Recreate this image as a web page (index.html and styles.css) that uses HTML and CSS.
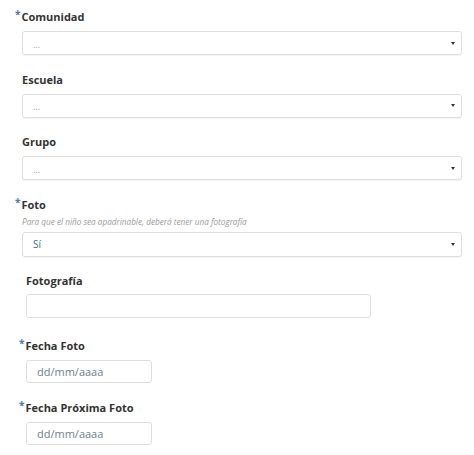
FILE: index.html
```html
<!DOCTYPE html>
<html lang="es">
<head>
<meta charset="utf-8">
<link rel="stylesheet" href="styles.css">
</head>
<body>
<form class="form">
  <div class="group">
    <label class="label"><span class="req">*</span>Comunidad</label>
    <div class="select"><span class="placeholder">...</span><span class="caret"></span></div>
  </div>
  <div class="group">
    <label class="label">Escuela</label>
    <div class="select"><span class="placeholder">...</span><span class="caret"></span></div>
  </div>
  <div class="group">
    <label class="label">Grupo</label>
    <div class="select"><span class="placeholder">...</span><span class="caret"></span></div>
  </div>
  <div class="group">
    <label class="label label-help"><span class="req">*</span>Foto</label>
    <p class="help">Para que el niño sea apadrinable, deberá tener una fotografía</p>
    <div class="select tall"><span class="value">Sí</span><span class="caret"></span></div>
  </div>
  <div class="group inner file">
    <label class="label label-file">Fotografía</label>
    <div class="input wide"></div>
  </div>
  <div class="group inner">
    <label class="label label-date"><span class="req">*</span>Fecha Foto</label>
    <div class="input date"><span class="ph">dd/mm/aaaa</span></div>
  </div>
  <div class="group inner">
    <label class="label label-date"><span class="req">*</span>Fecha Próxima Foto</label>
    <div class="input date"><span class="ph">dd/mm/aaaa</span></div>
  </div>
</form>
</body>
</html>
```
FILE: styles.css
```css
* { box-sizing: border-box; }
html, body { margin: 0; padding: 0; background: #fff; }
body { font-family: "Open Sans", "Noto Sans", sans-serif; color: #333; }
.form { display: flex; flex-direction: column; padding: 9px 12px 0 22px; width: 474px; }
.group { display: flex; flex-direction: column; margin-bottom: 16.5px; }
.label { font-size: 11px; font-weight: 700; line-height: 16px; color: #333; margin-bottom: 6px; }
.label-help { margin-bottom: 0; }
.label-file { margin-bottom: 5px; }
.label-date { margin-bottom: 6px; }
.req { color: #4a7bb0; font-size: 10px; position: relative; top: -3px; margin-left: -7px; margin-right: 1px; font-weight: 700; }
.help { margin: 3px 0 5px; font-size: 8.2px; font-style: italic; color: #9a9a9a; line-height: 11px; }
.select { height: 24px; width: 440px; border: 1px solid #dedede; border-radius: 3px; box-shadow: 0 1px 1px rgba(0,0,0,0.05); display: flex; align-items: center; justify-content: space-between; padding: 0 6px 0 10px; }
.tall { height: 25px; }
.placeholder { font-size: 9px; color: #999; line-height: 1; position: relative; top: 1px; }
.value { font-size: 10px; color: #3d6c96; }
.caret { width: 0; height: 0; border-left: 2.5px solid transparent; border-right: 2.5px solid transparent; border-top: 3px solid #333; }
.inner { padding-left: 4px; }
.file { margin-bottom: 20px; }
.input { height: 24px; border: 1px solid #dedede; border-radius: 3px; display: flex; align-items: center; padding: 0 10px; }
.wide { width: 345px; }
.date { width: 126px; height: 23px; }
.ph { font-size: 11px; color: #6e7f8f; }
```
